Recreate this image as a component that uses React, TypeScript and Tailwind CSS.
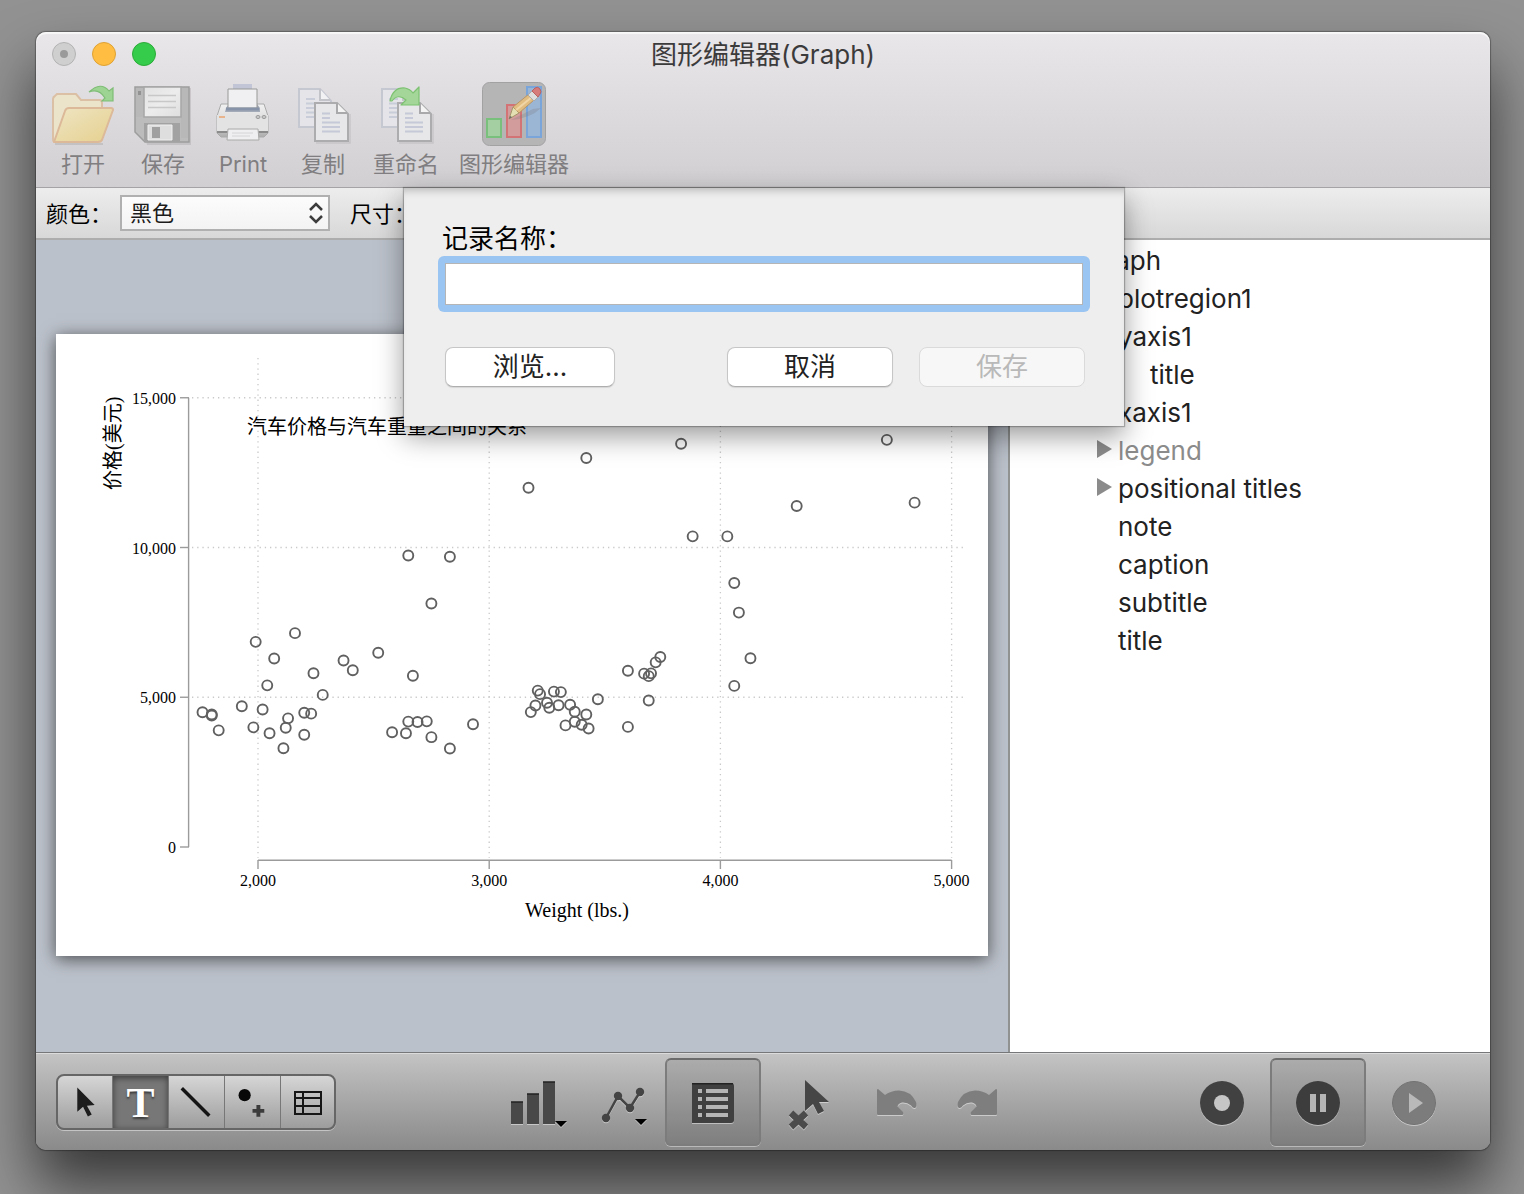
import React from "react";

const carPrices: [number, number][] = [
  [2930, 4099], [3350, 4749], [2640, 3799], [3250, 4816], [4080, 7827], [3670, 5788],
  [2230, 4453], [3280, 5189], [3880, 10372], [3400, 4082], [4330, 11385], [3900, 14500],
  [4290, 15906], [2110, 3299], [3690, 5705], [3180, 4504], [3220, 5104], [2750, 3667],
  [3430, 3955], [2120, 3984], [3600, 4010], [3600, 5886], [3740, 6342], [1800, 4389],
  [2650, 4187], [4840, 11497], [4720, 13594], [3830, 13466], [2580, 3829], [4060, 5379],
  [3720, 6165], [3370, 4516], [4130, 6303], [2830, 3291], [4060, 8814], [3310, 5172],
  [3300, 4733], [3690, 4890], [3370, 4181], [2730, 4195], [4030, 10371], [3260, 4647],
  [1800, 4425], [2200, 4482], [2520, 6486], [3330, 4060], [3700, 5798], [3470, 4934],
  [3210, 5222], [3200, 4723], [3420, 4424], [2690, 4172], [2830, 9690], [2070, 6295],
  [2650, 9735], [2370, 6229], [2020, 4589], [2280, 5079], [2750, 8129], [2130, 4296],
  [2240, 5799], [1760, 4499], [1980, 3995], [3420, 12990], [1830, 3895], [2050, 3798],
  [2410, 5899], [2200, 3748], [2670, 5719], [2160, 7140], [2040, 5397], [1930, 4697],
  [1990, 6850], [3170, 11995],
];

const plotX = (weight: number) => 202 + (weight - 2000) * 0.2312;
const plotY = (price: number) => 513 - price * 0.02995;

function ScatterChart() {
  return (
    <svg
      viewBox="0 0 932 622"
      className="block w-full bg-white font-['Liberation_Serif','Noto_Sans_CJK_SC',serif] shadow-[0_3px_16px_rgba(0,0,0,0.6)]"
      role="img"
      aria-label="汽车价格与汽车重量之间的关系"
    >
      <g stroke="#c9c9c9" strokeWidth="1.3" strokeDasharray="1.3 3.9">
        {[5000, 10000, 15000].map((p) => (
          <line key={p} x1="136" x2="908" y1={plotY(p)} y2={plotY(p)} />
        ))}
        {[2000, 3000, 4000, 5000].map((w) => (
          <line key={w} x1={plotX(w)} x2={plotX(w)} y1="24" y2="524" />
        ))}
      </g>
      <g stroke="#9b9b9b" strokeWidth="1.4" fill="none">
        <path d={`M132.6 ${plotY(15000)}V${plotY(0)}`} />
        <path d={`M${plotX(2000)} 526.3H${plotX(5000)}`} />
        {[0, 5000, 10000, 15000].map((p) => (
          <line key={p} x1="124" x2="133" y1={plotY(p)} y2={plotY(p)} />
        ))}
        {[2000, 3000, 4000, 5000].map((w) => (
          <line key={w} x1={plotX(w)} x2={plotX(w)} y1="526" y2="535" />
        ))}
      </g>
      <g fontSize="16" fill="#000">
        {[0, 5000, 10000, 15000].map((p) => (
          <text key={p} x="120" y={plotY(p) + 6} textAnchor="end">{p.toLocaleString("en-US")}</text>
        ))}
        {[2000, 3000, 4000, 5000].map((w) => (
          <text key={w} x={plotX(w)} y="552" textAnchor="middle">{w.toLocaleString("en-US")}</text>
        ))}
      </g>
      <g fontSize="20" fill="#000">
        <text x="521" y="583" textAnchor="middle">Weight (lbs.)</text>
        <text x="191" y="100">汽车价格与汽车重量之间的关系</text>
        <text transform="translate(64 156) rotate(-90)">价格(美元)</text>
      </g>
      <g fill="none" stroke="#606060" strokeWidth="1.9">
        {carPrices.map(([w, p], i) => (
          <circle key={i} cx={plotX(w)} cy={plotY(p)} r="5" />
        ))}
      </g>
    </svg>
  );
}

function OpenIcon() {
  return (
    <svg viewBox="2 0 64 64" className="size-16">
      <defs>
        <linearGradient id="folderFront" x1="0" y1="0" x2="1" y2="1">
          <stop offset="0" stopColor="#efe5c4" />
          <stop offset="1" stopColor="#e5d08e" />
        </linearGradient>
      </defs>
      <path d="M6 62h48" stroke="#b9b5b5" strokeWidth="2" opacity=".6" />
      <path d="M4 57V17q0-2 2-3l2-2h19l5 6h19q2 0 2 3v9l-9 30H6q-2 0-2-3z" fill="#ece3cb" stroke="#dcc0a5" strokeWidth="2" />
      <path d="M5 60 16 29q1-3 4-3h42q2 0 2 2l-11 30q-1 2-4 2z" fill="url(#folderFront)" stroke="#dcb998" strokeWidth="2" strokeLinejoin="round" />
      <path d="M40 10Q52-1 60 9l4-3v13H53l3-3Q50 6 40 10z" fill="#9ed493" stroke="#7fbd76" strokeWidth="1.200" />
    </svg>
  );
}

function SaveIcon() {
  return (
    <svg viewBox="2 0 64 64" className="size-16">
      <defs>
        <linearGradient id="floppyLabel" x1="0" y1="0" x2="1" y2="1">
          <stop offset="0" stopColor="#e2e2e2" />
          <stop offset=".5" stopColor="#ececec" />
          <stop offset="1" stopColor="#dedede" />
        </linearGradient>
      </defs>
      <path d="M7 6h55v57H18z" fill="#aaa6a8" opacity=".4" />
      <path d="M6 5h54v55H16L6 50z" fill="#bcbcbc" stroke="#9d9d9d" strokeWidth="1.500" />
      <path d="M7 6h8v29H7zM52 6h7v50h-7z" fill="#b8b8b8" />
      <path d="M15 5h37v30H15z" fill="url(#floppyLabel)" stroke="#a6a6a6" strokeWidth="1.5" />
      <path d="M19 13.500h28M19 19.500h28M19 25.500h28" stroke="#c8c8c8" strokeWidth="1.700" />
      <path d="M9 9h3v4H9z" fill="#929292" />
      <path d="M15 41h36v19H17l-2-2z" fill="#a2a2a2" />
      <path d="M19 43h24v15H19z" fill="#dedede" stroke="#f0f0f0" />
      <path d="M23 45h8v11h-8z" fill="#a0a0a0" />
    </svg>
  );
}

function PrintIcon() {
  return (
    <svg viewBox="1 0 64 64" className="size-16">
      <defs>
        <linearGradient id="printerBody" x1="0" y1="0" x2="0" y2="1">
          <stop offset="0" stopColor="#f1f1f1" />
          <stop offset=".55" stopColor="#d9d9d9" />
          <stop offset="1" stopColor="#adadad" />
        </linearGradient>
      </defs>
      <path d="M23 2h19v8H23z" fill="#c2c5d5" />
      <path d="M11 22h43l4 12v17l-4 4H11l-4-4V34z" fill="url(#printerBody)" stroke="#aaa" />
      <path d="M16 26 19 22h28l3 4v4H15z" fill="#a3abb9" />
      <path d="M18 7h29v19H18z" fill="#f0f0f2" stroke="#989898" />
      <path d="M16 27h33" stroke="#8793a8" strokeWidth="3" />
      <path d="M7 33q26-3 51 0v16H7z" fill="#e3e3e3" />
      <path d="M7 50h51" stroke="#8b8b8b" strokeWidth="2" />
      <path d="M18 47h30l1 11H17z" fill="#efeff1" stroke="#aaa" />
      <path d="M22 51h21M22 54h18" stroke="#d4d4d8" />
      <path d="M9 35h6" stroke="#e7b48d" strokeWidth="2" />
      <ellipse cx="48" cy="35" rx="2" ry="1.500" fill="#ccc" stroke="#999" />
      <ellipse cx="54" cy="35" rx="2" ry="1.500" fill="#ccc" stroke="#999" />
    </svg>
  );
}

function Pages() {
  return (
    <>
      <path d="M10 7h21l11 12v26H10z" fill="#e5e5e9" stroke="#c5c7d1" strokeWidth="2" />
      <path d="M17 17h9M17 21.500h9M17 26h9M17 30.500h9M17 35h9" stroke="#c9cdda" strokeWidth="2" />
      <path d="M31 7v11h10" fill="#f2f2f4" stroke="#c3c4ca" strokeWidth="2" />
      <path d="M27 61h34V32" stroke="#aeabad" strokeWidth="1.500" fill="none" opacity=".4" />
      <path d="M26 21h22l11 11v27H26z" fill="#e7e7e9" stroke="#acacae" strokeWidth="2" />
      <path d="M48 21v10h10" fill="#f4f4f4" stroke="#a9a9ab" strokeWidth="2" />
      <path d="M33 31.500h8M33 36h8M33 40.500h18M33 45h18M33 49.500h18" stroke="#c6cad8" strokeWidth="2" />
    </>
  );
}

function CopyIcon() {
  return <svg viewBox="2 0 64 64" className="size-16"><Pages /></svg>;
}

function RenameIcon() {
  return (
    <svg viewBox="2 0 64 64" className="size-16">
      <Pages />
      <path d="M18 19Q21 5 33 6q5 1 8 5l6-6v18H29l5-5q-8-7-14 1z" fill="#a3d698" stroke="#7cc271" strokeWidth="1.200" strokeLinejoin="round" />
    </svg>
  );
}

function GraphEditorIcon() {
  return (
    <svg viewBox="0 0 64 64" className="size-16">
      <rect x=".5" y=".5" width="63" height="63" rx="7" fill="#b6b5b6" stroke="#a3a2a3" />
      <rect x="5" y="37" width="14" height="18" fill="#a3cfa3" stroke="#79c07d" strokeWidth="2" />
      <rect x="25" y="23" width="14" height="32" fill="#d29b9c" stroke="#d37376" strokeWidth="2" />
      <rect x="45" y="5" width="14" height="50" fill="#9bb5d4" stroke="#7aa5da" strokeWidth="2" />
      <path d="M29 38q20-2 30-12l-8 1z" fill="#777" opacity=".25" />
      <path d="m27 37 4-12 6 6z" fill="#e3dfb2" stroke="#a5946b" />
      <path d="m31 25 16-13 5 6-15 13z" fill="#e2bd82" stroke="#b79564" />
      <path d="m34 28 16-13" stroke="#f0d6a6" strokeWidth="2" />
      <path d="m46 13 4-4 6 6-4 4z" fill="#ddd" stroke="#aaa" />
      <path d="m50 9 3-3q3-2 5 1t0 5l-2 3z" fill="#d67d7c" stroke="#b96261" />
      <path d="m27 37 1-3 2 1z" fill="#666" />
    </svg>
  );
}

const toolbarItems = [
  { label: "打开", icon: <OpenIcon /> },
  { label: "保存", icon: <SaveIcon /> },
  { label: "Print", icon: <PrintIcon /> },
  { label: "复制", icon: <CopyIcon /> },
  { label: "重命名", icon: <RenameIcon /> },
  { label: "图形编辑器", icon: <GraphEditorIcon /> },
];

function TitleBar() {
  return (
    <header className="rounded-t-[10px] border-b border-[#a5a3a5] bg-linear-to-b from-[#e9e7ea] to-[#d1cfd2] shadow-[inset_0_2px_1px_rgba(255,255,255,0.7)]">
      <div className="grid h-11 grid-cols-[1fr_auto_1fr] items-center px-4">
        <div className="flex gap-4">
          <button aria-label="关闭" className="flex size-6 items-center justify-center rounded-full border border-[#b4b3b4] bg-[#d0cfd0]">
            <span className="size-2 rounded-full bg-[#9b9a9b]" />
          </button>
          <button aria-label="最小化" className="size-6 rounded-full border border-[#dea236] bg-[#ffbe41]" />
          <button aria-label="缩放" className="size-6 rounded-full border border-[#2bab38] bg-[#35cb4b]" />
        </div>
        <h1 className="pt-0.5 text-[26px] leading-8 text-[#3c3b3c]">图形编辑器(Graph)</h1>
      </div>
      <div className="flex h-[111px] gap-4 px-[15px] pt-1.5">
        {toolbarItems.map((item) => (
          <button key={item.label} className="flex min-w-16 shrink-0 flex-col items-center text-[22px] leading-9 whitespace-nowrap text-[#807e80]">
            {item.icon}
            <span className="px-0.5">{item.label}</span>
          </button>
        ))}
      </div>
    </header>
  );
}

function OptionsBar() {
  return (
    <div className="flex h-[52px] items-center border-b-2 border-[#adadad] bg-linear-to-b from-[#ededed] to-[#d8d8d8] px-[10px] text-[22px] text-black">
      <label htmlFor="colour" className="w-[74px] pt-0.5">颜色：</label>
      <div className="relative mr-5 w-[210px]">
        <select id="colour" className="block h-9 w-full appearance-none border-2 border-[#b0b0b0] bg-linear-to-b from-[#fcfcfc] to-[#f3f3f3] px-2 leading-8 text-[#1c1c1c]">
          <option>黑色</option>
        </select>
        <svg viewBox="0 0 14 22" className="pointer-events-none absolute top-[7px] right-[7px] h-[22px] w-[14px]" fill="none" stroke="#3c3c3c" strokeWidth="2.500">
          <path d="m1 8 6-6 6 6M1 14l6 6 6-6" />
        </svg>
      </div>
      <span className="pt-0.5">尺寸：</span>
    </div>
  );
}

const tree = [
  { label: "Graph", pad: "pl-[76px]" },
  { label: "plotregion1", pad: "pl-[108px]" },
  { label: "yaxis1", pad: "pl-[108px]" },
  { label: "title", pad: "pl-[140px]" },
  { label: "xaxis1", pad: "pl-[108px]" },
  { label: "legend", pad: "pl-[87px]", arrow: true, muted: true },
  { label: "positional titles", pad: "pl-[87px]", arrow: true },
  { label: "note", pad: "pl-[108px]" },
  { label: "caption", pad: "pl-[108px]" },
  { label: "subtitle", pad: "pl-[108px]" },
  { label: "title", pad: "pl-[108px]" },
];

function ObjectTree() {
  return (
    <aside className="w-[482px] border-l-2 border-[#8f9291] bg-white pt-[2px]">
      <ul className="text-[26px] leading-[38px] text-[#222]">
        {tree.map((node, i) => (
          <li key={i} className={node.pad}>
            {node.arrow ? (
              <button className="flex items-center gap-[6px]">
                <svg viewBox="0 0 15 18" className="mb-1 h-[18px] w-[15px]"><path d="M0 0 15 9 0 18z" fill="#8b8b8b" /></svg>
                <span className={node.muted ? "text-[#8b8b8b]" : ""}>{node.label}</span>
              </button>
            ) : (
              node.label
            )}
          </li>
        ))}
      </ul>
    </aside>
  );
}

const segment = "flex w-14 items-center justify-center border-r border-[#777] last:border-r-0";

function ToolSegments() {
  return (
    <div className="flex h-14 overflow-hidden rounded-lg border-2 border-[#666] bg-linear-to-b from-[#d6d6d6] to-[#9d9d9d] shadow-[0_1px_0_#c4c4c4]">
      <button aria-label="选择" className={`${segment} w-[55px]`}>
        <svg viewBox="0 0 56 52" className="h-[52px] w-14">
          <path d="M20 11v25l6-5 5 10 4-2-5-9 8-1z" fill="#1d1d1d" />
        </svg>
      </button>
      <button aria-label="文本" className={`${segment} bg-[#777] pt-0.5 font-['Liberation_Serif',serif] text-[42px] leading-none font-bold text-white shadow-[inset_0_2px_6px_rgba(0,0,0,0.5)] text-shadow-[0_2px_2px_rgba(0,0,0,0.5)]`}>
        T
      </button>
      <button aria-label="线条" className={segment}>
        <svg viewBox="0 0 56 52" className="h-[52px] w-14"><path d="m13 12 28 28" stroke="#151515" strokeWidth="3.500" /></svg>
      </button>
      <button aria-label="添加标记" className={segment}>
        <svg viewBox="0 0 56 52" className="h-[52px] w-14">
          <circle cx="20" cy="19" r="6.200" fill="#080808" />
          <path d="M34 29v12M28 35h12" stroke="#3c3c3c" strokeWidth="4" />
        </svg>
      </button>
      <button aria-label="网格" className={`${segment} w-[53px]`}>
        <svg viewBox="0 0 28 24" className="mt-0.5 h-6 w-7" fill="none" stroke="#161616" strokeWidth="2">
          <path d="M1 1h26v22H1zM1 7h26M1 15h26M9 1v22" />
        </svg>
      </button>
    </div>
  );
}

const pressed = "rounded-md border-2 border-[#7c7c7c] border-t-[#6b6b6b] bg-black/10 shadow-[0_1px_0_#b9b9b9]";
const etched = "drop-shadow-[0_1px_0_rgba(255,255,255,0.45)]";

function BottomBar() {
  return (
    <footer className="flex h-[98px] items-center justify-between rounded-b-[10px] border-t border-[#757779] bg-linear-to-b from-[#c4c4c4] to-[#8a8a8a] pr-7 pl-5 shadow-[inset_0_1px_0_#dcdcdc]">
      <ToolSegments />
      <div className="flex items-center">
        <button aria-label="柱状图" className="flex h-[88px] w-[86px] items-center justify-center">
          <svg viewBox="-1 -1 86 88" className={`h-[88px] w-[86px] ${etched}`}>
            <path d="M17 43h12v22H17zM33 35h12v30H33zM49 23h12v42H49z" fill="#484848" />
            <path d="M17 43h12M33 35h12M49 23h12" stroke="#222" strokeWidth="1.500" />
            <path d="M61 62h12l-6 6z" fill="#000" />
          </svg>
        </button>
        <button aria-label="折线图" className="flex h-[88px] w-[86px] items-center justify-center">
          <svg viewBox="-1 -1 86 88" className={`h-[88px] w-[86px] ${etched}`}>
            <path d="m26 59 12-22 12 12 10-16" fill="none" stroke="#444" strokeWidth="2.500" />
            <g fill="#444"><circle cx="26" cy="59" r="4.200" /><circle cx="38" cy="37" r="4.200" /><circle cx="50" cy="49" r="4.200" /><circle cx="60" cy="33" r="4.200" /></g>
            <path d="M55 60h12l-6 6z" fill="#000" />
          </svg>
        </button>
        <button aria-label="对象列表" aria-pressed="true" className={`flex h-[88px] w-24 items-center justify-center pt-0.5 ${pressed}`}>
          <svg viewBox="0 0 42 40" className={`h-10 w-[42px] ${etched}`}>
            <path d="M0 0h39q3 0 3 3v34q0 3-3 3H0z" fill="#404040" />
            <path d="M0 .7h41" stroke="#222" strokeWidth="1.500" />
            <path d="M6 8h4M6 16h4M6 24h4M6 32h4M14 8h22M14 16h22M14 24h22M14 32h22" stroke="#b5b5b5" strokeWidth="4" />
          </svg>
        </button>
        <button aria-label="取消选择" className="flex h-[88px] w-24 items-center justify-center">
          <svg viewBox="0 -1 96 88" className={`h-[88px] w-24 ${etched}`} fill="#464646">
            <path d="M44 21v31l8-7 5 10 6-3-5-9h10z" />
            <path d="m30 54 15 14M45 54 30 68" stroke="#4b4b4b" strokeWidth="6.500" />
          </svg>
        </button>
        <button aria-label="撤销" className="flex h-[88px] w-20 items-center justify-center">
          <svg viewBox="0 0 40 26" className={`h-[26px] w-10 ${etched}`}>
            <path d="M1 0 8 6Q14 1.500 22 1.500 34 2 39 13q1.500 5-1 6-2 .5-4-2.500-4-3.500-9-3-4 1-4.500 4L26 23q1 3-1 3H1q-1 0-1-1V1q0-1 1-1z" fill="#7e7e7e" />
          </svg>
        </button>
        <button aria-label="重做" className="flex h-[88px] w-20 items-center justify-center">
          <svg viewBox="0 0 40 26" className={`h-[26px] w-10 ${etched}`}>
            <path d="M39 0 32 6Q26 1.500 18 1.500 6 2 1 13q-1.500 5 1 6 2 .5 4-2.500 4-3.500 9-3 4 1 4.500 4L14 23q-1 3 1 3h24q1 0 1-1V1q0-1-1-1z" fill="#7e7e7e" />
          </svg>
        </button>
      </div>
      <div className="flex items-center">
        <button aria-label="录制" className="flex h-[88px] w-24 items-center justify-center pt-0.5">
          <svg viewBox="0 0 44 44" className={`size-11 ${etched}`}><circle cx="22" cy="22" r="22" fill="#414141" /><circle cx="22" cy="22" r="8" fill="#c6c6c6" /></svg>
        </button>
        <button aria-label="暂停" aria-pressed="true" className={`flex h-[88px] w-24 items-center justify-center pt-0.5 ${pressed}`}>
          <svg viewBox="0 0 44 44" className={`size-11 ${etched}`}><circle cx="22" cy="22" r="22" fill="#3d3d3d" /><path d="M14 13h6v18h-6zM24 13h6v18h-6z" fill="#b5b5b5" /></svg>
        </button>
        <button aria-label="播放" className="flex h-[88px] w-24 items-center justify-center pt-0.5">
          <svg viewBox="0 0 44 44" className={`size-11 ${etched}`}><circle cx="22" cy="22" r="21.500" fill="#7c7c7c" stroke="#727272" /><path d="m17 12 14 10-14 10z" fill="#b9b9b9" /></svg>
        </button>
      </div>
    </footer>
  );
}

const dialogButton = "h-10 rounded-lg border border-[#c6c6c6] border-b-[#aeaeae] bg-white text-[26px] leading-9 text-[#222] shadow-[0_1px_1px_rgba(0,0,0,0.1)]";

function RecordDialog() {
  return (
    <div role="dialog" aria-labelledby="record-label" className="w-[720px] bg-[#eeeeee] px-[34px] pt-[33px] pb-[39px] shadow-[inset_0_8px_8px_-6px_rgba(0,0,0,0.25),0_0_1px_1px_rgba(0,0,0,0.25),0_10px_26px_rgba(0,0,0,0.4)]">
      <label id="record-label" htmlFor="record-name" className="block pl-1 text-[26px] leading-[35px] text-black">记录名称：</label>
      <div className="rounded-md bg-[#9ac4f2] p-[7px]">
        <input id="record-name" type="text" className="block h-[42px] w-full border border-[#b5b5b5] bg-white px-2 text-[26px] outline-none" />
      </div>
      <div className="mt-[35px] flex pr-[5px] pl-[7px]">
        <button className={`${dialogButton} mr-auto w-[170px]`}>浏览...</button>
        <button className={`${dialogButton} mr-[26px] w-[166px]`}>取消</button>
        <button disabled className="h-10 w-[166px] rounded-lg border border-[#dadada] bg-[#f7f7f7] text-[26px] leading-9 text-[#b9b9b9]">保存</button>
      </div>
    </div>
  );
}

export default function App() {
  return (
    <div className="flex min-h-screen overflow-hidden bg-[#929292] pt-8 pr-[34px] pb-11 pl-9 font-[Inter,'Noto_Sans_CJK_SC',sans-serif]">
      <div className="relative flex w-full flex-col rounded-[10px] shadow-[0_0_1px_1px_rgba(0,0,0,0.3),0_36px_60px_rgba(0,0,0,0.62)]">
        <TitleBar />
        <OptionsBar />
        <main className="flex flex-1">
          <section className="flex flex-1 items-center bg-[#bbc1ca] px-5 pb-0.5">
            <ScatterChart />
          </section>
          <ObjectTree />
        </main>
        <BottomBar />
        <div className="absolute inset-x-0 top-[156px] flex justify-center pl-[2px]">
          <RecordDialog />
        </div>
      </div>
    </div>
  );
}
